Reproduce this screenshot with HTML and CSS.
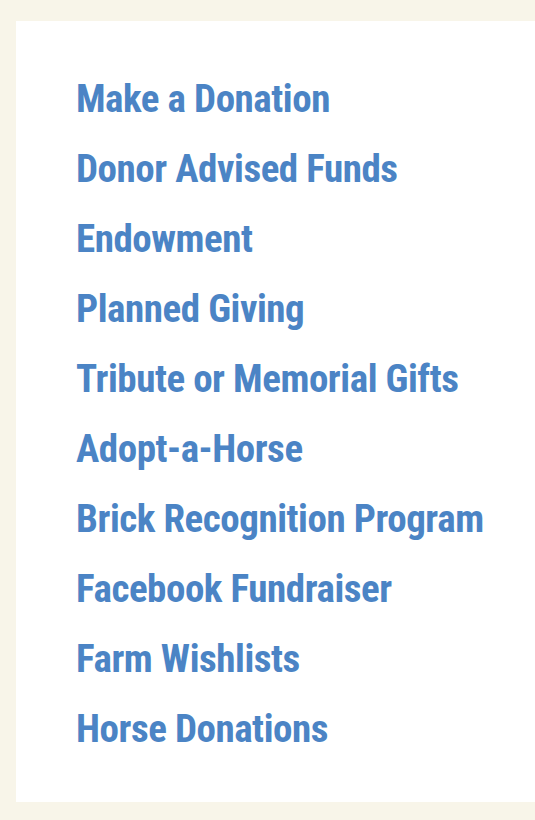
FILE: index.html
```html
<!DOCTYPE html>
<html lang="en">

<head>
    <meta charset="UTF-8" />
    <meta name="viewport" content="width=device-width,initial-scale=1.0" />
    <title>Ways to Give</title>
    <link rel="stylesheet" href="styles.css">
</head>

<body>
    <div class="panel">
        <ul class="give-list">
            <li><a href="#">Make a Donation</a></li>
            <li><a href="#">Donor Advised Funds</a></li>
            <li><a href="#">Endowment</a></li>
            <li><a href="#">Planned Giving</a></li>
            <li><a href="#">Tribute or Memorial Gifts</a></li>
            <li><a href="#">Adopt-a-Horse</a></li>
            <li><a href="#">Brick Recognition Program</a></li>
            <li><a href="#">Facebook Fundraiser</a></li>
            <li><a href="#">Farm Wishlists</a></li>
            <li><a href="#">Horse Donations</a></li>
        </ul>
    </div>
</body>

</html>
```

FILE: styles.css
```css
* {
    margin: 0;
    padding: 0;
    box-sizing: border-box;
}

body {
    background: #f8f5e9;
    padding: 21px 0 18px 16px;
    font-family: Roboto, "Liberation Sans", sans-serif;
    font-stretch: condensed;
    overflow: hidden;
}

.panel {
    background: #ffffff;
    width: 540px;
    padding: 43px 0 38px 60px;
}

.give-list {
    list-style: none;
}

.give-list li {
    height: 70px;
    line-height: 70px;
    white-space: nowrap;
}

.give-list a {
    font-size: 39px;
    font-weight: 700;
    color: #4b84c5;
    text-decoration: none;
    letter-spacing: -0.45px;
}
```
